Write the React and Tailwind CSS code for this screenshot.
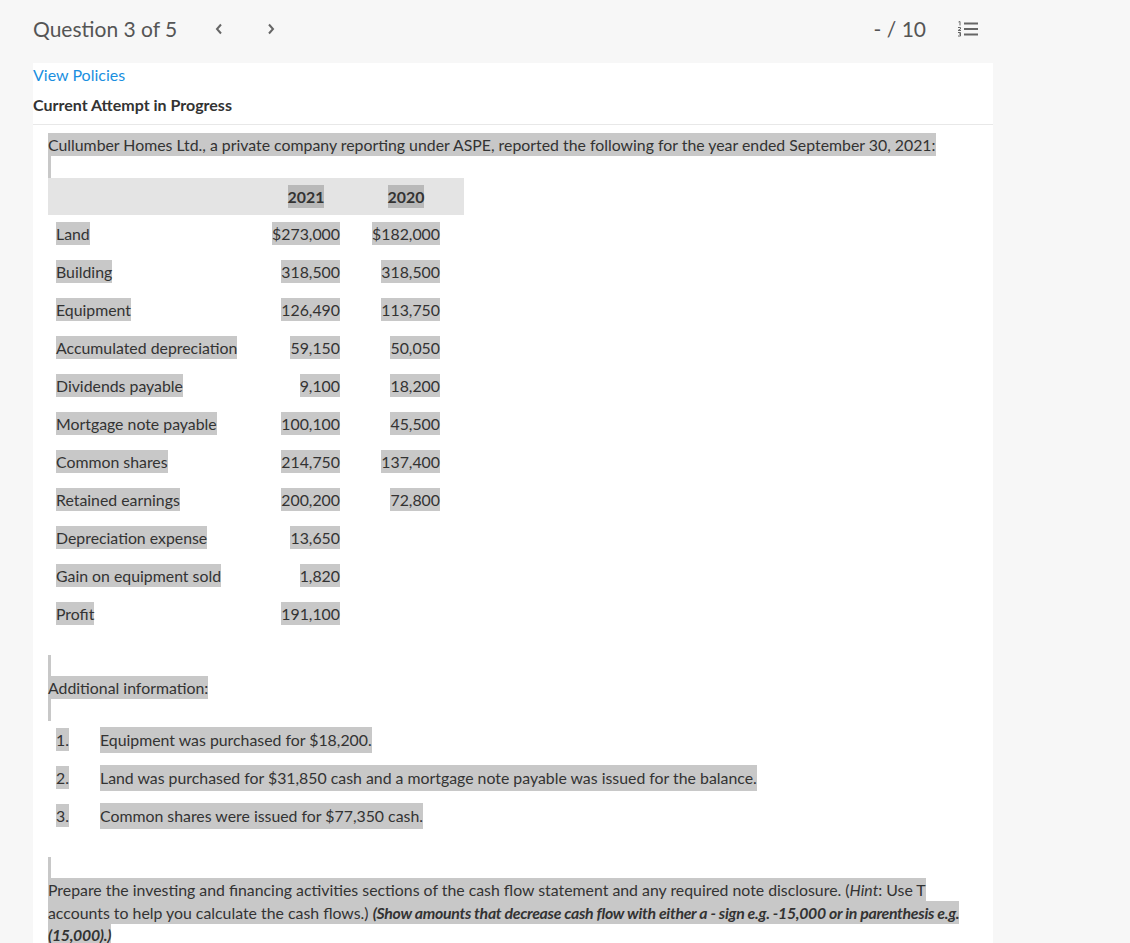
import React from "react";

const rows = [
  ["Land", "$273,000", "$182,000"],
  ["Building", "318,500", "318,500"],
  ["Equipment", "126,490", "113,750"],
  ["Accumulated depreciation", "59,150", "50,050"],
  ["Dividends payable", "9,100", "18,200"],
  ["Mortgage note payable", "100,100", "45,500"],
  ["Common shares", "214,750", "137,400"],
  ["Retained earnings", "200,200", "72,800"],
  ["Depreciation expense", "13,650", ""],
  ["Gain on equipment sold", "1,820", ""],
  ["Profit", "191,100", ""],
];

const items = [
  "Equipment was purchased for $18,200.",
  "Land was purchased for $31,850 cash and a mortgage note payable was issued for the balance.",
  "Common shares were issued for $77,350 cash.",
];

// selected-text look
const Hl = ({ children }) => (
  <span className="bg-[#c8c8c8] py-[2px] box-decoration-clone">{children}</span>
);

const Bar = () => <div className="w-[3px] h-[22px] bg-[#c8c8c8]" />;

const ListIcon = () => (
  <svg width="21" height="16" viewBox="0 0 21 16" fill="none">
    <rect x="7" y="1.5" width="14" height="2" fill="#666" />
    <rect x="7" y="7" width="14" height="2" fill="#666" />
    <rect x="7" y="12.5" width="14" height="2" fill="#666" />
    <path d="M1.5 1 L3 0.5 V4.5" stroke="#666" strokeWidth="1" />
    <path d="M1 6.5 H3.5 V8 L1 9.5 H4" stroke="#666" strokeWidth="1" />
    <path d="M1 11.5 H3.5 V13 H2 M3.5 13 V15 H1" stroke="#666" strokeWidth="1" />
  </svg>
);

const Chevron = ({ dir }) => (
  <svg width="8" height="12" viewBox="0 0 8 12" fill="none">
    <path
      d={dir === "left" ? "M6 1.5 L2 6 L6 10.5" : "M2 1.5 L6 6 L2 10.5"}
      stroke="#666"
      strokeWidth="2"
    />
  </svg>
);

export default function App() {
  return (
    <div className="min-h-[943px] bg-[#f7f7f7] text-[#333] font-['Lato',sans-serif]">
      {/* Top bar */}
      <div className="h-[63px] flex items-center pl-[33px] pr-[152px] pb-[6px]">
        <span className="text-[21px] text-[#555] leading-none">Question 3 of 5</span>
        <div className="ml-[38px] flex items-center gap-[44px]">
          <Chevron dir="left" />
          <Chevron dir="right" />
        </div>
        <span className="ml-auto text-[21px] text-[#555] leading-none">- / 10</span>
        <div className="ml-[31px]">
          <ListIcon />
        </div>
      </div>

      {/* Content panel */}
      <div className="ml-[33px] w-[960px] bg-white min-h-[880px]">
        <div className="pt-px">
          <a className="text-[16px] text-[#1a8fe0] leading-[22px] block">View Policies</a>
          <div className="mt-[8px] text-[16px] font-bold leading-[22px]">Current Attempt in Progress</div>
          <div className="mt-[8px] h-px bg-[#e8e8e8]" />
        </div>

        <div className="pl-[15px] pt-[9px] text-[15.85px] leading-[22px]">
          <p>
            <Hl>
              Cullumber Homes Ltd., a private company reporting under ASPE, reported the following for the year ended
              September 30, 2021:
            </Hl>
          </p>
          <Bar />

          {/* Table */}
          <div className="w-[416px]">
            <div className="grid grid-cols-[216px_84px_116px] h-[37px] items-center bg-[#e4e4e4] font-bold">
              <div />
              <div className="text-center">
                <span className="bg-[#b9b9b9] py-[2px]">2021</span>
              </div>
              <div className="text-center">
                <span className="bg-[#b9b9b9] py-[2px]">2020</span>
              </div>
            </div>
            {rows.map(([label, a, b]) => (
              <div key={label} className="grid grid-cols-[216px_84px_116px] h-[38px] items-center">
                <div className="pl-[8px]">
                  <Hl>{label}</Hl>
                </div>
                <div className="text-right pr-[8px]">
                  <Hl>{a}</Hl>
                </div>
                <div className="text-right pr-[24px]">{b && <Hl>{b}</Hl>}</div>
              </div>
            ))}
          </div>

          {/* Additional information */}
          <div className="mt-[22px]">
            <Bar />
            <p>
              <Hl>Additional information:</Hl>
            </p>
            <Bar />
          </div>

          <ol>
            {items.map((t, i) => (
              <li key={i} className="h-[38px] flex items-center">
                <span className="w-[52px] pl-[8px]">
                  <Hl>{i + 1}.</Hl>
                </span>
                <Hl>{t}</Hl>
              </li>
            ))}
          </ol>

          {/* Instructions */}
          <div className="mt-[22px] pr-[20px]">
            <Bar />
            <p className="leading-[22.5px]">
              <Hl>
                Prepare the investing and financing activities sections of the cash flow statement and any required
                note disclosure. (<i>Hint</i>: Use T accounts to help you calculate the cash flows.){" "}
                <b className="tracking-[-0.3px]">
                  <i>
                    (Show amounts that decrease cash flow with either a - sign e.g. -15,000 or in parenthesis e.g.
                    (15,000).)
                  </i>
                </b>
              </Hl>
            </p>
          </div>
        </div>
      </div>
    </div>
  );
}
